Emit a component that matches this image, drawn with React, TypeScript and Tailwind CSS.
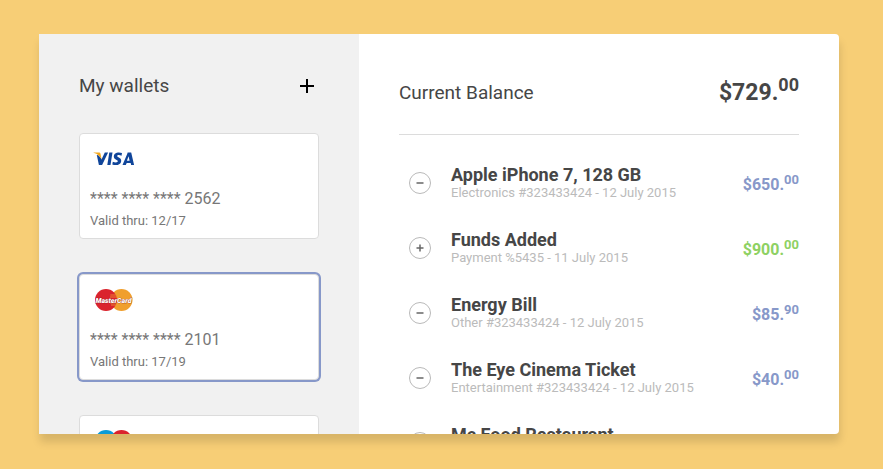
type Wallet = {
    brand: 'visa' | 'mastercard' | 'maestro';
    digits: string;
    valid: string;
    selected?: boolean;
};

type Transaction = {
    name: string;
    details: string;
    whole: string;
    cents: string;
    credit?: boolean;
};

const wallets: Wallet[] = [
    { brand: 'visa', digits: '2562', valid: '12/17' },
    { brand: 'mastercard', digits: '2101', valid: '17/19', selected: true },
    { brand: 'maestro', digits: '4080', valid: '11/18' },
];

const transactions: Transaction[] = [
    { name: 'Apple iPhone 7, 128 GB', details: 'Electronics #323433424 - 12 July 2015', whole: '650', cents: '00' },
    { name: 'Funds Added', details: 'Payment %5435 - 11 July 2015', whole: '900', cents: '00', credit: true },
    { name: 'Energy Bill', details: 'Other #323433424 - 12 July 2015', whole: '85', cents: '90' },
    { name: 'The Eye Cinema Ticket', details: 'Entertainment #323433424 - 12 July 2015', whole: '40', cents: '00' },
    { name: 'Mc Food Restaurant', details: 'Food #323433424 - 12 July 2015', whole: '12', cents: '00' },
];

function BrandLogo({ brand }: { brand: Wallet['brand'] }) {
    if (brand === 'visa') {
        return (
            <svg className="h-7 w-12" viewBox="0 0 48 28" role="img" aria-label="Visa">
                <path d="M8.300 10.200c1.600 1.200 2.600 2.600 3.200 4.200l3.300-6.900h3.300l-6 12.500H8.900L6.800 10z" fill="#10459a" />
                <path d="M19.300 7.500h3.200l-2 12.500h-3.200z" fill="#10459a" />
                <path d="M32 8l-.5 2.700c-1.800-.8-4.300-.9-4.300.3 0 1.400 4 1.600 4 4.700 0 4.300-5.200 5.200-8.900 3.800l.5-2.800c2 1 5 1.100 5-.4 0-1.400-4-1.500-4-4.700 0-4 4.700-5 8.200-3.600z" fill="#10459a" />
                <path d="M37.700 7.500h3.500l2.900 12.500h-3l-.4-1.900h-4l-.9 1.900h-3.300l4.800-11.300c.1-.6.200-1 .4-1.200zm.9 3.700l-1.700 4.500h2.700z" fill="#10459a" fillRule="evenodd" />
                <path d="M3.500 7.500h5.200c1.100 0 1.600.4 1.800 1.200l1.200 6C10.300 11.500 7.800 8.900 3.500 7.800z" fill="#f3a71c" />
            </svg>
        );
    }

    if (brand === 'mastercard') {
        return (
            <svg className="h-7 w-12" viewBox="0 0 48 28" role="img" aria-label="MasterCard">
                <circle cx="31.500" cy="14" r="11" fill="#f09f2d" />
                <circle cx="16" cy="14" r="11" fill="#da232d" />
                <path d="M20.300 9h6M20 11h7M20 17h7M21 19h5" stroke="#f09f2d" strokeWidth="0.800" />
                <text x="23.500" y="16.500" textAnchor="middle" fill="#fff" stroke="#8c1d24" strokeWidth="0.500" paintOrder="stroke" className="font-['Roboto',sans-serif] text-[7px] font-black italic [text-rendering:geometricPrecision]">
                    MasterCard
                </text>
            </svg>
        );
    }

    return (
        <svg className="h-7 w-12" viewBox="0 0 48 28" role="img" aria-label="Maestro">
            <circle cx="16" cy="14" r="11" fill="#0a9bd8" />
            <circle cx="31.500" cy="14" r="11" fill="#da232d" />
        </svg>
    );
}

function WalletCard({ wallet }: { wallet: Wallet }) {
    return (
        <button
            type="button"
            aria-pressed={!!wallet.selected}
            className={`block w-full rounded border border-[#dcdcdc] bg-white px-2.5 pt-[11px] pb-2 text-left text-[#777] ${wallet.selected ? 'ring-2 ring-[#8798c9]' : ''}`}
        >
            <BrandLogo brand={wallet.brand} />
            <span className="mt-3.5 block text-base leading-6">**** **** **** {wallet.digits}</span>
            <span className="block text-[13px] leading-[19px]">Valid thru: {wallet.valid}</span>
        </button>
    );
}

function TransactionRow({ item }: { item: Transaction }) {
    return (
        <li className="flex h-[65px] items-center">
            <svg className="ml-2.5 size-[22px] shrink-0" viewBox="0 0 22 22" fill="none" aria-hidden="true">
                <circle cx="11" cy="11" r="10.500" stroke="#b9b9b9" />
                <path d={item.credit ? 'M7.500 11h7M11 7.500v7' : 'M7.500 11h7'} stroke="#666" strokeWidth="1.500" />
            </svg>
            <div className="ml-5 min-w-0 flex-1">
                <h3 className="text-lg leading-5 font-bold text-[#464646]">{item.name}</h3>
                <p className="text-[13px] leading-4 text-[#bbb]">{item.details}</p>
            </div>
            <p className={`mt-1 text-base font-bold ${item.credit ? 'text-[#8ed163]' : 'text-[#8798c9]'}`}>
                ${item.whole}.<sup className="static align-super text-[13px]">{item.cents}</sup>
            </p>
        </li>
    );
}

export default function App() {
    return (
        <div className="flex h-screen bg-[#f7ce76] pt-[34px] pr-11 pb-[35px] pl-[39px] font-['Roboto',sans-serif]">
            <main className="flex w-full overflow-hidden rounded-r bg-white shadow-[1px_8px_8px_rgba(0,0,0,0.13)]">
                <aside className="w-2/5 shrink-0 bg-[#f1f1f1] px-10 pt-10">
                    <div className="mb-[35px] flex h-6 items-center justify-between">
                        <h2 className="text-[19px] text-[#464646]">My wallets</h2>
                        <button type="button" aria-label="Add wallet" className="flex size-6 items-center justify-center text-black">
                            <svg className="size-3.5" viewBox="0 0 14 14" aria-hidden="true">
                                <path d="M0 7h14M7 0v14" stroke="currentColor" strokeWidth="2" />
                            </svg>
                        </button>
                    </div>
                    <div className="space-y-[35px]">
                        {wallets.map((wallet) => (
                            <WalletCard key={wallet.digits} wallet={wallet} />
                        ))}
                    </div>
                </aside>
                <section className="min-w-0 flex-1 px-10 pt-10">
                    <div className="flex items-center justify-between border-b border-[#dcdcdc] pb-[22px] leading-[38px] text-[#464646]">
                        <h2 className="text-[19px]">Current Balance</h2>
                        <p className="text-[23px] font-bold">
                            $729.<sup className="static align-super text-[18px]">00</sup>
                        </p>
                    </div>
                    <ul className="pt-[15px]">
                        {transactions.map((item) => (
                            <TransactionRow key={item.name} item={item} />
                        ))}
                    </ul>
                </section>
            </main>
        </div>
    );
}
